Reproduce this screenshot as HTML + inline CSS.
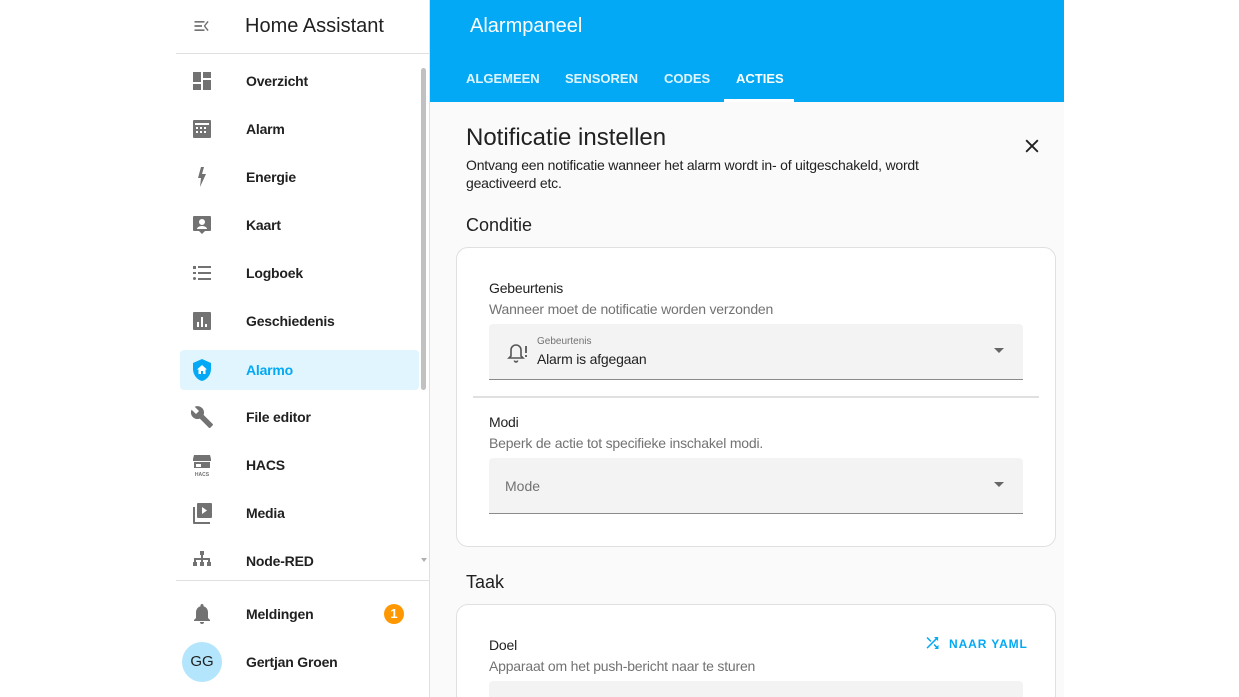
<!DOCTYPE html>
<html><head><meta charset="utf-8"><style>
*{margin:0;padding:0;box-sizing:border-box}
html,body{width:1239px;height:697px;overflow:hidden}
body{background:#fff;font-family:"Liberation Sans",Roboto,sans-serif}
#w{position:relative;width:1239px;height:697px;overflow:hidden}
.a{position:absolute}
.side{left:176px;top:0;width:254px;height:697px;background:#fff;border-right:1px solid #e0e0e0}
.item{position:absolute;left:0;width:254px;height:40px}
.item .ic{position:absolute;left:14px;top:8px;width:24px;height:24px}
.item .t{position:absolute;left:70px;top:12px;font-size:14px;font-weight:bold;color:#212121;letter-spacing:-.2px}
.main{left:430px;top:0;width:634px;height:697px;background:#fafafa}
.hdr{left:430px;top:0;width:634px;height:102px;background:#03a9f4}
.tab{position:absolute;top:71px;font-size:13px;font-weight:bold;color:#e1f5fe}
.card{position:absolute;left:456px;width:600px;background:#fff;border:1px solid #e0e0e0;border-radius:12px}
.lbl{font-size:14px;color:#212121;letter-spacing:-.2px}
.sub{font-size:14px;color:#727272;letter-spacing:-.2px}
.field{position:absolute;left:489px;width:534px;background:#f3f3f3;border-bottom:1px solid #8a8a8a;border-radius:4px 4px 0 0}
</style></head><body><div id="w">
<div class="a side">
 <svg class="a" style="left:16px;top:16px" width="20" height="20" viewBox="0 0 24 24"><path fill="#727272" d="M3 6h12v2H3zM3 11h9v2H3zM3 16h12v2H3zM20 7l-4 5 4 5-1.5 1L14 12l4.5-6z"/></svg>
 <div class="a" style="left:69px;top:15px;font-size:20px;color:#212121">Home Assistant</div>
 <div class="a" style="left:0;top:53px;width:253px;height:1px;background:#e0e0e0"></div>
 <div class="a" style="left:245px;top:68px;width:5px;height:322px;background:#c1c1c1;border-radius:3px"></div>
 <div class="item" style="top:61px"><svg class="ic" viewBox="0 0 24 24"><path fill="#727272" d="M3 3h8v10H3zM13 3h8v6h-8zM13 11h8v10h-8zM3 15h8v6H3z"/></svg><span class="t">Overzicht</span></div>
 <div class="item" style="top:109px"><svg class="ic" viewBox="0 0 24 24"><path fill="#727272" d="M4 3h16a1 1 0 011 1v16a1 1 0 01-1 1H4a1 1 0 01-1-1V4a1 1 0 011-1zm1 3v2h14V6zm1 4v2h2v-2zm4 0v2h2v-2zm4 0v2h2v-2zm-8 4v2h2v-2zm4 0v2h2v-2zm4 0v2h2v-2z"/></svg><span class="t">Alarm</span></div>
 <div class="item" style="top:157px"><svg class="ic" viewBox="0 0 24 24"><path fill="#727272" d="M11 2h3l-2 7h4l-6 13 1-9H8z"/></svg><span class="t">Energie</span></div>
 <div class="item" style="top:205px"><svg class="ic" viewBox="0 0 24 24"><path fill="#727272" d="M4 3h16a1 1 0 011 1v13a1 1 0 01-1 1h-5l-3 3-3-3H4a1 1 0 01-1-1V4a1 1 0 011-1zm8 3a3 3 0 100 6 3 3 0 000-6zm-5 10h10c0-2-3-3-5-3s-5 1-5 3z"/></svg><span class="t">Kaart</span></div>
 <div class="item" style="top:253px"><svg class="ic" viewBox="0 0 24 24"><path fill="#727272" d="M3 5h3v3H3zM8 5h13v2H8zM3 11h3v2H3zM8 11h13v2H8zM4.5 16a1.5 1.5 0 110 3 1.5 1.5 0 010-3zM8 17h13v2H8z"/></svg><span class="t">Logboek</span></div>
 <div class="item" style="top:301px"><svg class="ic" viewBox="0 0 24 24"><path fill="#727272" d="M4 3h16a1 1 0 011 1v16a1 1 0 01-1 1H4a1 1 0 01-1-1V4a1 1 0 011-1zm3 10v5h2v-5zm4-5v10h2V8zm4 7v3h2v-3z"/></svg><span class="t">Geschiedenis</span></div>
 <div class="item" style="top:350px;left:4px;width:239px;background:#e1f5fe;border-radius:4px"><svg class="ic" style="left:10px" viewBox="0 0 24 24"><path fill="#03a9f4" d="M12 1L3 5v6c0 5.5 3.8 10.7 9 12 5.2-1.3 9-6.5 9-12V5z"/><path fill="#fff" d="M12 7l-5 4.5h1.5V16h2.5v-3h2v3h2.5v-4.5H17z"/></svg><span class="t" style="left:66px;color:#03a9f4">Alarmo</span></div>
 <div class="item" style="top:397px"><svg class="ic" viewBox="0 0 24 24"><path fill="#727272" d="M22.7 19l-9.1-9.1c.9-2.3.4-5-1.5-6.9-2-2-5-2.4-7.4-1.3L9 6 6 9 1.6 4.7C.4 7.1.9 10.1 2.9 12.1c1.9 1.9 4.6 2.4 6.9 1.5l9.1 9.1c.4.4 1 .4 1.4 0l2.3-2.3c.5-.4.5-1.1.1-1.4z"/></svg><span class="t">File editor</span></div>
 <div class="item" style="top:445px"><svg class="ic" viewBox="0 0 24 24"><path fill="#727272" d="M4 2h16l1 4v2H3V6zM4 9h16v6H4zm2 2v3h5v-3z"/><text x="12" y="23" font-size="5" font-family="Liberation Sans" font-weight="bold" fill="#727272" text-anchor="middle">HACS</text></svg><span class="t">HACS</span></div>
 <div class="item" style="top:493px"><svg class="ic" viewBox="0 0 24 24"><path fill="#727272" d="M8 2h13a1 1 0 011 1v13a1 1 0 01-1 1H8a1 1 0 01-1-1V3a1 1 0 011-1zm4 4v7l5-3.5zM3 6h2v15h15v2H4a1 1 0 01-1-1z"/></svg><span class="t">Media</span></div>
 <div class="item" style="top:541px"><svg class="ic" viewBox="0 0 24 24"><path fill="#727272" d="M10 2h4v4h-1v3h7v4h1v4h-4v-4h1v-2h-5v2h1v4h-4v-4h1v-2H6v2h1v4H3v-4h1V9h7V6h-1z"/></svg><span class="t">Node-RED</span></div>
 <div class="a" style="left:245px;top:558px;border:3px solid transparent;border-top:4px solid #b0b0b0"></div>
 <div class="a" style="left:0;top:580px;width:253px;height:1px;background:#e0e0e0"></div>
 <div class="item" style="top:594px"><svg class="ic" viewBox="0 0 24 24"><path fill="#727272" d="M12 2a1.5 1.5 0 011.5 1.5v.7A6 6 0 0118 10v6l2 2v1H4v-1l2-2v-6a6 6 0 014.5-5.8v-.7A1.5 1.5 0 0112 2zm-2 18h4a2 2 0 01-4 0z"/></svg><span class="t">Meldingen</span>
  <div class="a" style="left:208px;top:10px;width:20px;height:20px;border-radius:50%;background:#ff9800;color:#fff;font-size:13px;font-weight:bold;text-align:center;line-height:20px">1</div></div>
 <div class="a" style="left:6px;top:642px;width:40px;height:40px;border-radius:50%;background:#b3e5fc;color:#212121;font-size:15px;text-align:center;line-height:40px">GG</div>
 <div class="a" style="left:70px;top:654px;font-size:14px;font-weight:bold;color:#212121;letter-spacing:-.2px">Gertjan Groen</div>
</div>
<div class="a main"></div>
<div class="a hdr">
 <div class="a" style="left:40px;top:15px;font-size:20px;color:#fff">Alarmpaneel</div>
 <span class="tab" style="left:36px">ALGEMEEN</span>
 <span class="tab" style="left:135px">SENSOREN</span>
 <span class="tab" style="left:234px">CODES</span>
 <span class="tab" style="left:306px;color:#fff">ACTIES</span>
 <div class="a" style="left:294px;top:99px;width:70px;height:3px;background:#fff"></div>
</div>
<div class="a" style="left:466px;top:124px;font-size:24px;color:#212121">Notificatie instellen</div>
<svg class="a" style="left:1022px;top:136px" width="20" height="20" viewBox="0 0 24 24"><path stroke="#212121" stroke-width="2.2" d="M5 5l14 14M19 5L5 19"/></svg>
<div class="a" style="left:466px;top:156px;width:505px;font-size:14px;line-height:18px;color:#212121;letter-spacing:-.2px">Ontvang een notificatie wanneer het alarm wordt in- of uitgeschakeld, wordt geactiveerd etc.</div>
<div class="a" style="left:466px;top:215px;font-size:18px;color:#212121">Conditie</div>
<div class="card" style="top:247px;height:300px"></div>
<div class="a lbl" style="left:489px;top:280px">Gebeurtenis</div>
<div class="a sub" style="left:489px;top:301px">Wanneer moet de notificatie worden verzonden</div>
<div class="field" style="top:324px;height:56px">
 <svg class="a" style="left:17px;top:17px" width="24" height="24" viewBox="0 0 24 24"><path fill="none" stroke="#555" stroke-width="1.6" d="M10 4a5 5 0 015 5v6l2 2H3l2-2V9a5 5 0 015-5zM8.5 19.5a1.5 1.5 0 003 0"/><path stroke="#555" stroke-width="1.8" d="M20 5v7M20 14v2"/></svg>
 <div class="a" style="left:48px;top:12px;font-size:10px;color:#727272">Gebeurtenis</div>
 <div class="a" style="left:48px;top:27px;font-size:14px;color:#212121;letter-spacing:-.2px">Alarm is afgegaan</div>
 <div class="a" style="left:505px;top:24px;border:5px solid transparent;border-top:5px solid #666"></div>
</div>
<div class="a" style="left:473px;top:396px;width:566px;height:2px;background:#e0e0e0"></div>
<div class="a lbl" style="left:489px;top:414px">Modi</div>
<div class="a sub" style="left:489px;top:435px">Beperk de actie tot specifieke inschakel modi.</div>
<div class="field" style="top:458px;height:56px">
 <div class="a" style="left:16px;top:20px;font-size:14px;color:#727272">Mode</div>
 <div class="a" style="left:505px;top:24px;border:5px solid transparent;border-top:5px solid #666"></div>
</div>
<div class="a" style="left:466px;top:572px;font-size:18px;color:#212121">Taak</div>
<div class="card" style="top:604px;height:120px"></div>
<div class="a lbl" style="left:489px;top:637px">Doel</div>
<div class="a sub" style="left:489px;top:658px">Apparaat om het push-bericht naar te sturen</div>
<svg class="a" style="left:923px;top:634px" width="19" height="18" viewBox="0 0 24 24"><path fill="#03a9f4" d="M14 4l2.04 2.04L4 18.09 5.41 19.5 17.46 7.46 19.5 9.5V4zM10.59 9.17L5.41 4 4 5.41l5.17 5.17zM14.83 13.41l-1.41 1.41 3.13 3.13L14.5 20H20v-5.5l-2.04 2.04z"/></svg>
<div class="a" style="left:949px;top:637px;font-size:12px;font-weight:bold;color:#03a9f4;letter-spacing:.9px">NAAR YAML</div>
<div class="field" style="top:681px;height:40px;border:none"></div>
</div></body></html>
